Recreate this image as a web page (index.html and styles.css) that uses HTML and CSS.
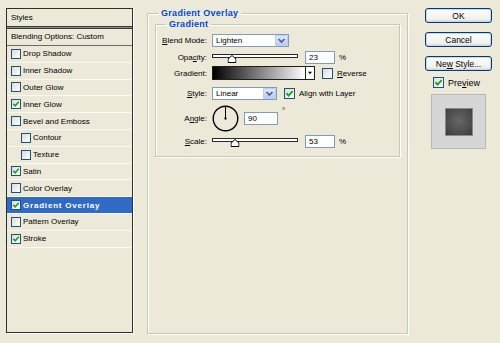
FILE: index.html
```html
<!DOCTYPE html>
<html lang="en">
<head>
    <meta charset="UTF-8">
    <title>Layer Style</title>
    <link rel="stylesheet" href="styles.css">
</head>
<body>
    <div class="dialog">
        <div class="styles-panel">
            <div class="panel-head">Styles</div>
            <div class="panel-rule"></div>
            <div class="panel-blend">Blending Options: Custom</div>
            <ul class="style-list">
                <li><span class="check"></span>Drop Shadow</li>
                <li><span class="check"></span>Inner Shadow</li>
                <li><span class="check"></span>Outer Glow</li>
                <li><span class="check"><svg viewBox="0 0 8 8"><path d="M1.3 3.8 L3.2 5.8 L6.8 1.8"/></svg></span>Inner Glow</li>
                <li><span class="check"></span>Bevel and Emboss</li>
                <li class="sub"><span class="check"></span>Contour</li>
                <li class="sub"><span class="check"></span>Texture</li>
                <li><span class="check"><svg viewBox="0 0 8 8"><path d="M1.3 3.8 L3.2 5.8 L6.8 1.8"/></svg></span>Satin</li>
                <li><span class="check"></span>Color Overlay</li>
                <li class="selected"><span class="check"><svg viewBox="0 0 8 8"><path d="M1.3 3.8 L3.2 5.8 L6.8 1.8"/></svg></span>Gradient Overlay</li>
                <li><span class="check"></span>Pattern Overlay</li>
                <li><span class="check"><svg viewBox="0 0 8 8"><path d="M1.3 3.8 L3.2 5.8 L6.8 1.8"/></svg></span>Stroke</li>
            </ul>
        </div><!-- styles-panel -->

        <fieldset class="group outer">
            <legend>Gradient Overlay</legend>
            <fieldset class="group inner">
                <legend>Gradient</legend>

                <div class="row r-blend">
                    <span class="lbl"><u>B</u>lend Mode:</span>
                    <div class="select blend-select">
                        <span class="select-text">Lighten</span>
                        <span class="drop"><svg viewBox="0 0 11 9"><path d="M2.5 3 L5.5 6 L8.5 3"/></svg></span>
                    </div>
                </div>

                <div class="row r-opacity">
                    <span class="lbl">Opa<u>c</u>ity:</span>
                    <div class="slider">
                        <div class="track"></div>
                        <svg class="thumb" style="left: 23%" viewBox="0 0 9 8"><polygon points="0.5,7.5 0.5,4 4.5,0.5 8.5,4 8.5,7.5"/></svg>
                    </div>
                    <div class="field">23</div>
                    <span class="unit">%</span>
                </div>

                <div class="row r-gradient">
                    <span class="lbl">Gradient:</span>
                    <div class="ramp-picker">
                        <div class="ramp"></div>
                        <div class="ramp-btn"><svg viewBox="0 0 7 5"><polygon points="1,1 6,1 3.5,4"/></svg></div>
                    </div>
                    <span class="check box-md"></span>
                    <span class="opt"><u>R</u>everse</span>
                </div>

                <div class="row r-style">
                    <span class="lbl"><u>S</u>tyle:</span>
                    <div class="select style-select">
                        <span class="select-text">Linear</span>
                        <span class="drop"><svg viewBox="0 0 11 9"><path d="M2.5 3 L5.5 6 L8.5 3"/></svg></span>
                    </div>
                    <span class="check box-md"><svg viewBox="0 0 8 8"><path d="M1.3 3.8 L3.2 5.8 L6.8 1.8"/></svg></span>
                    <span class="opt">Align with Layer</span>
                </div>

                <div class="row r-angle">
                    <span class="lbl">A<u>n</u>gle:</span>
                    <svg class="dial" viewBox="0 0 27 27">
                        <circle cx="13.5" cy="13.5" r="12.3"/>
                        <line x1="13.5" y1="13.5" x2="13.5" y2="1.5"/>
                        <rect x="12.5" y="12.5" width="2" height="2"/>
                    </svg>
                    <div class="field angle-field">90</div>
                    <span class="deg">°</span>
                </div>

                <div class="row r-scale">
                    <span class="lbl"><u>S</u>cale:</span>
                    <div class="slider">
                        <div class="track"></div>
                        <svg class="thumb" style="left: 27%" viewBox="0 0 9 8"><polygon points="0.5,7.5 0.5,4 4.5,0.5 8.5,4 8.5,7.5"/></svg>
                    </div>
                    <div class="field">53</div>
                    <span class="unit">%</span>
                </div>
            </fieldset>
        </fieldset>

        <div class="side">
            <button class="btn">OK</button>
            <button class="btn">Cancel</button>
            <button class="btn">Ne<u>w</u> Style...</button>
            <div class="preview-toggle">
                <span class="check box-md"><svg viewBox="0 0 8 8"><path d="M1.3 3.8 L3.2 5.8 L6.8 1.8"/></svg></span>
                <span class="preview-label">Pre<u>v</u>iew</span>
            </div>
            <div class="preview-box">
                <div class="swatch"></div>
            </div>
        </div><!-- side -->
    </div>
</body>
</html>
```

FILE: styles.css
```css
body {
    margin: 0;
    background: #ece9d8;
    font-family: "Liberation Sans", Arial, sans-serif;
    font-size: 8px;
    color: #000;
}
u {
    text-decoration: underline;
}
.dialog {
    display: flex;
    align-items: flex-start;
    padding: 8px 0 0 6px;
    height: 343px;
    box-sizing: border-box;
}

/* left list of effects */
.styles-panel {
    width: 127px;
    height: 325px;
    box-sizing: border-box;
    border: 1px solid #2f2f2f;
    box-shadow: 1px 1px 0 #fff;
}
.panel-head {
    height: 17px;
    line-height: 17px;
    padding-left: 4px;
}
.panel-rule {
    height: 1px;
    border-top: 1px solid #3a3a3a;
    border-bottom: 1px solid #3a3a3a;
    background: #8d8b82;
}
.panel-blend {
    height: 16px;
    line-height: 16px;
    padding-left: 4px;
    border-bottom: 1px solid #6b6a63;
}
.style-list {
    list-style: none;
    margin: 0;
    padding: 0;
}
.style-list li {
    height: 15.8px;
    display: flex;
    align-items: center;
    padding-left: 4px;
    border-bottom: 1px solid #faf9f3;
}
.style-list li.sub {
    padding-left: 14px;
}
.style-list li.selected {
    background: #316ac5;
    color: #fff;
    font-weight: bold;
    letter-spacing: 0.8px;
}
.check {
    width: 10px;
    height: 10px;
    box-sizing: border-box;
    border: 1px solid #1c5180;
    background: linear-gradient(135deg, #dcdcd5, #fff);
    margin-right: 2px;
    flex: none;
    display: flex;
}
.check svg {
    width: 8px;
    height: 8px;
}
.check path {
    fill: none;
    stroke: #21a121;
    stroke-width: 1.7;
}
.box-md {
    width: 11px;
    height: 11px;
}
.box-md svg {
    width: 9px;
    height: 9px;
}

/* group boxes */
.group {
    border: 1px solid #c9c6b5;
    box-shadow: inset 1px 1px 0 #fff, 1px 1px 0 #fff;
    margin: 0;
    min-width: 0;
    box-sizing: border-box;
}
.group legend {
    color: #0046d5;
    font-weight: bold;
    font-size: 9px;
    letter-spacing: 0.3px;
    line-height: 10px;
    padding: 0 3px;
}
.outer {
    margin-left: 14px;
    width: 261px;
    height: 326px;
    padding: 0 7px;
}
.outer > legend {
    margin-left: 3px;
}
.inner {
    margin-top: 1px;
    padding: 0 4px 8px;
}
.inner > legend {
    margin-left: 6px;
}

/* rows of controls */
.row {
    display: flex;
    align-items: center;
}
.lbl {
    width: 47px;
    margin-right: 5px;
    text-align: right;
    flex: none;
}
.r-blend {
    margin-top: 3px;
    height: 16px;
}
.r-opacity {
    height: 18px;
}
.r-gradient {
    height: 14px;
}
.r-style {
    margin-top: 5px;
    height: 16px;
}
.r-angle {
    margin-top: 3px;
    height: 28px;
}
.r-scale {
    margin-top: 2px;
    height: 14px;
}

.select {
    height: 13px;
    box-sizing: border-box;
    border: 1px solid #7f9db9;
    background: #fff;
    display: flex;
    align-items: center;
}
.blend-select {
    width: 77px;
}
.style-select {
    width: 65px;
}
.select-text {
    flex: 1;
    padding-left: 3px;
}
.drop {
    width: 13px;
    height: 11px;
    box-sizing: border-box;
    border: 1px solid #bccdf6;
    border-radius: 1px;
    background: linear-gradient(#dfe8fe, #b8cbf7);
    display: flex;
}
.drop svg {
    width: 11px;
    height: 9px;
}
.drop path {
    fill: none;
    stroke: #4d6185;
    stroke-width: 1.6;
}

.slider {
    position: relative;
    width: 86px;
    height: 14px;
}
.track {
    margin-top: 4px;
    height: 2px;
    border: 1px solid #2a2a2a;
    background: #fff;
}
.thumb {
    position: absolute;
    top: 5px;
    width: 9px;
    height: 8px;
    transform: translateX(-50%);
}
.thumb polygon {
    fill: #fff;
    stroke: #000;
    stroke-width: 1;
}
.field {
    margin-left: 7px;
    width: 30px;
    height: 13px;
    box-sizing: border-box;
    border: 1px solid #7f9db9;
    background: #fff;
    padding-left: 3px;
    line-height: 11px;
}
.unit {
    margin-left: 4px;
}

.ramp-picker {
    width: 103px;
    height: 14px;
    box-sizing: border-box;
    border: 1px solid #1e1e1e;
    display: flex;
}
.ramp {
    flex: 1;
    background: linear-gradient(to right, #000, #fff);
}
.ramp-btn {
    width: 8px;
    border-left: 1px solid #1e1e1e;
    background: #fff;
    display: flex;
    align-items: center;
    justify-content: center;
}
.ramp-btn svg {
    width: 6px;
    height: 4px;
}
.ramp-btn polygon {
    fill: #000;
}
.r-gradient .check,
.r-style .check {
    margin-left: 7px;
}
.opt {
    margin-left: 2px;
}

.dial {
    width: 27px;
    height: 27px;
    flex: none;
}
.dial circle {
    fill: none;
    stroke: #000;
    stroke-width: 1.4;
}
.dial line {
    stroke: #000;
    stroke-width: 1;
}
.angle-field {
    margin-left: 5px;
    width: 34px;
}
.deg {
    align-self: flex-start;
    margin: 2px 0 0 4px;
}

/* buttons and preview */
.side {
    margin-left: 17px;
    width: 67px;
    display: flex;
    flex-direction: column;
}
.btn {
    width: 67px;
    height: 15px;
    margin: 0 0 9px;
    padding: 0;
    border: 1px solid #003c74;
    border-radius: 3px;
    background: linear-gradient(#fff, #f1f0ea 80%, #d8d2c6);
    box-shadow: inset 0 0 0 1px #c4d6f3;
    font-family: "Liberation Sans", Arial, sans-serif;
    font-size: 8.5px;
    color: #000;
}
.preview-toggle {
    margin: -3px 0 0 8px;
    display: flex;
    align-items: center;
    height: 11px;
}
.preview-label {
    margin-left: 2px;
    font-size: 9px;
}
.preview-box {
    margin: 6px 0 0 6px;
    width: 55px;
    height: 55px;
    box-sizing: border-box;
    border: 1px solid #b9b9b4;
    background: #d6d6d6;
    display: flex;
    align-items: center;
    justify-content: center;
}
.swatch {
    width: 26px;
    height: 26px;
    background: radial-gradient(circle at 50% 45%, #666, #4a4a4a 70%, #383838);
    box-shadow: 0 0 0 1px #8a8a8a;
}
```
